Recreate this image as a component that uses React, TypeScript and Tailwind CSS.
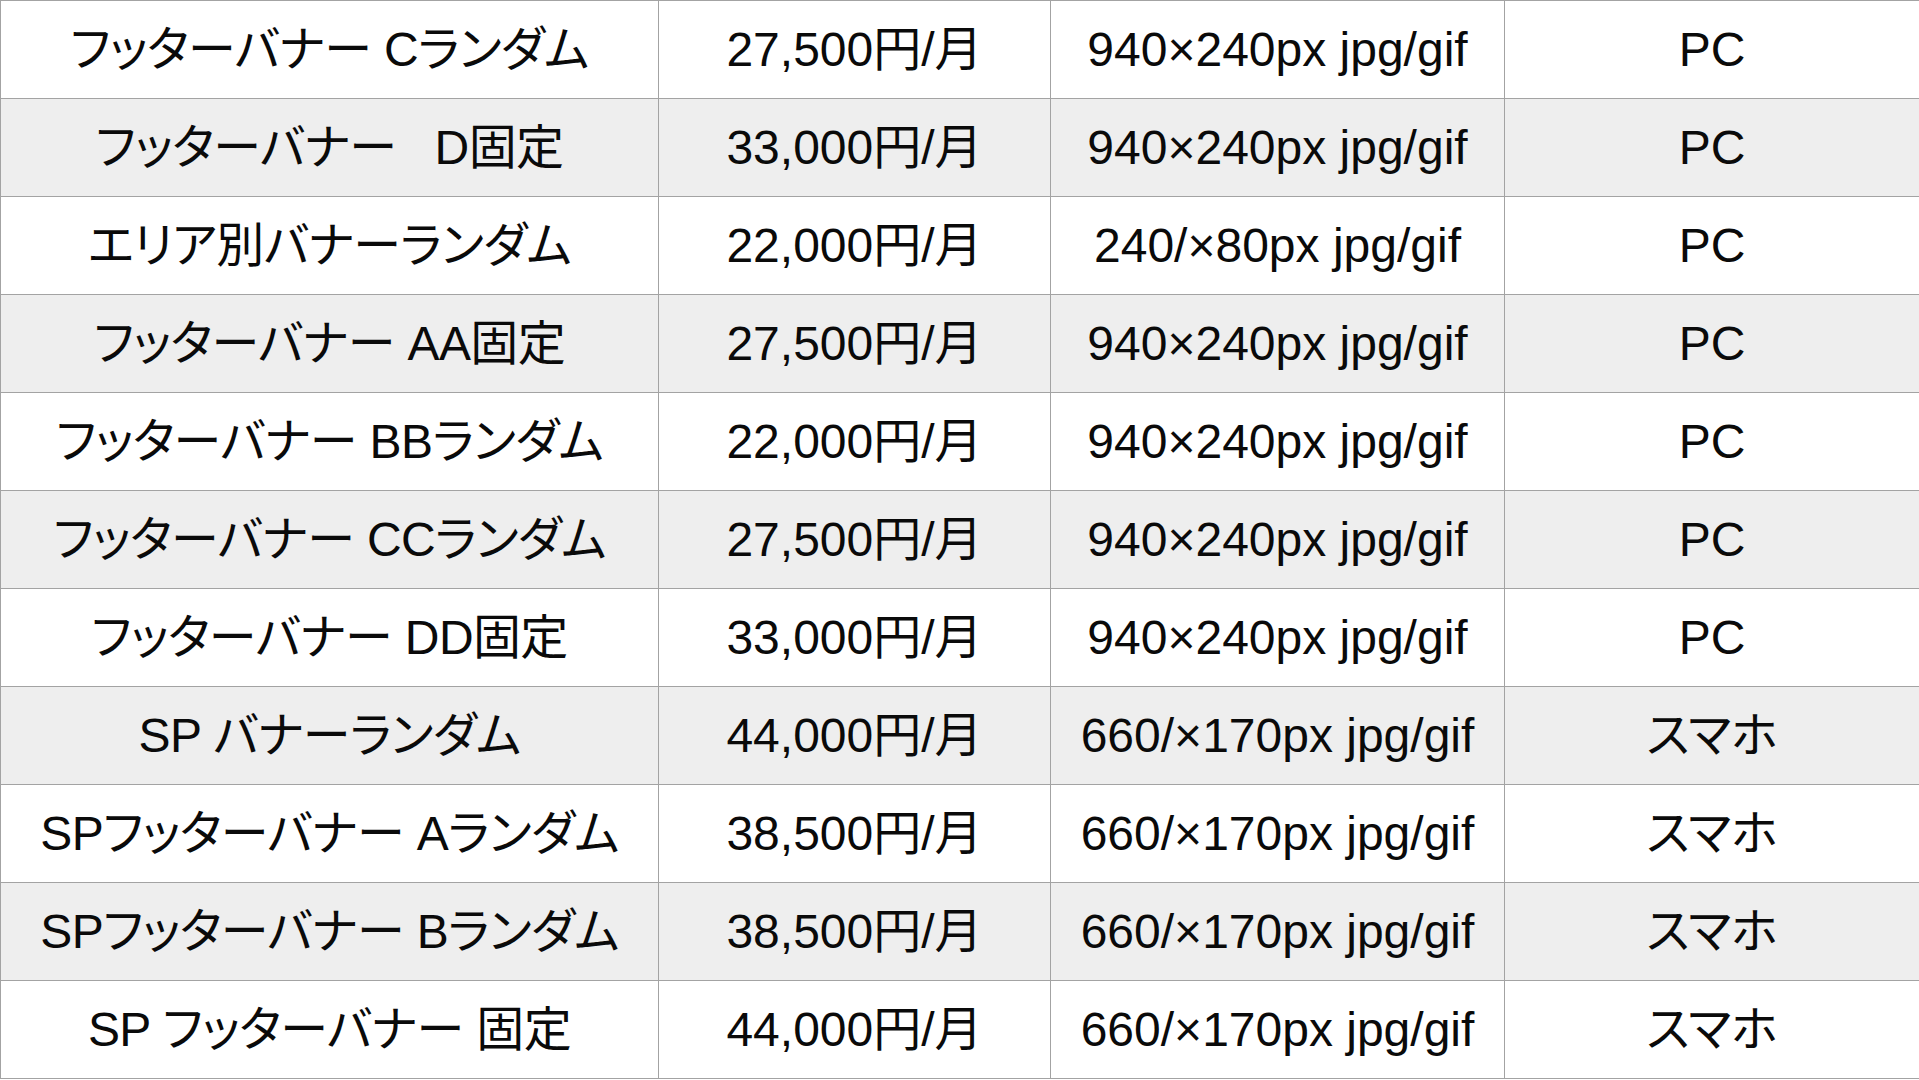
import React from "react";

const rows: [string, string, string, string][] = [
  ["フッターバナー Cランダム", "27,500円/月", "940×240px jpg/gif", "PC"],
  ["フッターバナー   D固定", "33,000円/月", "940×240px jpg/gif", "PC"],
  ["エリア別バナーランダム", "22,000円/月", "240/×80px jpg/gif", "PC"],
  ["フッターバナー AA固定", "27,500円/月", "940×240px jpg/gif", "PC"],
  ["フッターバナー BBランダム", "22,000円/月", "940×240px jpg/gif", "PC"],
  ["フッターバナー CCランダム", "27,500円/月", "940×240px jpg/gif", "PC"],
  ["フッターバナー DD固定", "33,000円/月", "940×240px jpg/gif", "PC"],
  ["SP バナーランダム", "44,000円/月", "660/×170px jpg/gif", "スマホ"],
  ["SPフッターバナー Aランダム", "38,500円/月", "660/×170px jpg/gif", "スマホ"],
  ["SPフッターバナー Bランダム", "38,500円/月", "660/×170px jpg/gif", "スマホ"],
  ["SP フッターバナー 固定", "44,000円/月", "660/×170px jpg/gif", "スマホ"],
];

export default function App() {
  return (
    <div className="w-[1919px] h-[1080px] overflow-hidden bg-white">
      <div
        className="grid grid-cols-[658px_392px_454px_1fr] text-[48px] text-[#0a0a0a] leading-none [font-feature-settings:'palt'] border-b border-[#a3a3a3]"
        style={{ fontFamily: '"Liberation Sans", Arial, "Noto Sans CJK JP", sans-serif' }}
      >
        {rows.map((r, i) => (
          <React.Fragment key={i}>
            {r.map((c, j) => (
              <div
                key={j}
                className={`h-[98px] flex items-center justify-center whitespace-pre border-t border-l border-[#a3a3a3] ${
                  i % 2 === 1 ? "bg-[#eeeeee]" : "bg-white"
                } ${j === 0 ? "tracking-[-0.6px]" : ""}`}
              >
                {c}
              </div>
            ))}
          </React.Fragment>
        ))}
      </div>
    </div>
  );
}
